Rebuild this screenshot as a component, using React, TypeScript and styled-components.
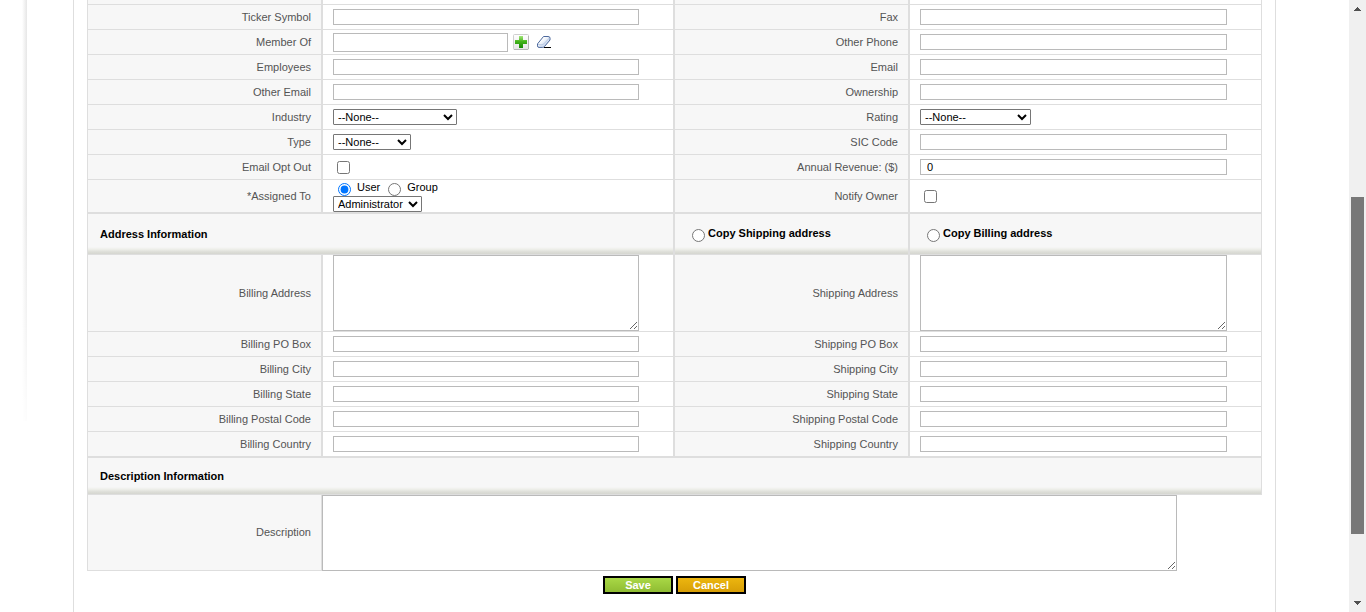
import React from 'react';
import styled, { createGlobalStyle } from 'styled-components';

const line = '#dedede';
const shade = '#f7f7f7';

const GlobalStyle = createGlobalStyle`
  * { box-sizing: border-box; }
  body {
    margin: 0;
    background: #fff;
    color: #000;
    font-family: "Liberation Sans", Arial, Helvetica, sans-serif;
    font-size: 11px;
    line-height: 13px;
  }
`;

const Viewport = styled.div`
  display: flex;
  height: 100vh;
  overflow: hidden;
`;

const EdgeShadow = styled.div`
  flex: none;
  width: 5px;
  height: 421px;
  margin-left: 22px;
  background: linear-gradient(to right, #fff, #e6e6e6);
  mask-image: linear-gradient(to bottom, #000 50%, rgba(0, 0, 0, 0.1));
`;

const Panel = styled.main`
  flex: 1;
  min-width: 0;
  min-height: 100%;
  margin: 0 73px 0 46px;
  padding: 0 13px;
  border: solid ${line};
  border-width: 0 1px;
`;

const Grid = styled.div`
  display: grid;
  grid-template-columns: 20% round(down, 30%, 1px) 20% 1fr;
`;

const Cell = styled.div`
  display: flex;
  align-items: center;
  min-width: 0;
  border: solid ${line};
  border-width: 0 1px 1px;
`;

const LabelCell = styled(Cell)`
  justify-content: flex-end;
  padding-right: 10px;
  background: ${shade};
  color: #545454;
`;

const ValueCell = styled(Cell)<{ $tall?: boolean }>`
  min-height: ${p => (p.$tall ? 33 : 25)}px;
  padding-left: 10px;
`;

const ClippedCell = styled(Cell)<{ $shaded?: boolean }>`
  height: 5px;
  background: ${p => (p.$shaded ? shade : '#fff')};
`;

const HeaderCell = styled.div<{ $span?: number; $short?: boolean }>`
  display: flex;
  align-items: center;
  grid-column: span ${p => p.$span ?? 1};
  height: ${p => (p.$short ? 38 : 42)}px;
  padding-left: 12px;
  border: 1px solid ${line};
  background: linear-gradient(to top, #d5d6d0, #dcddd7 2px, #eff0eb 5px, ${shade} 7px);
  font-weight: bold;

  label { padding-bottom: 2px; }
`;

const SectionTitle = styled.h2`
  margin: 0;
  font-size: 11px;
  line-height: 13px;
`;

const TextInput = styled.input`
  width: 90%;
  height: 16px;
  padding: 0 6px;
  border: 1px solid #bababa;
  background: #fff;
  font: inherit;
  outline: none;
`;

const LookupInput = styled(TextInput)`
  width: 175px;
  height: 19px;
`;

const IconButton = styled.button`
  display: flex;
  width: 16px;
  height: 16px;
  margin-left: 5px;
  padding: 0;
  border: 0;
  background: none;

  & + & { margin-left: 7px; }
`;

const TextArea = styled.textarea<{ $wide?: boolean }>`
  display: block;
  width: ${p => (p.$wide ? '91%' : '90%')};
  height: 76px;
  padding: 2px;
  border: 1px solid #bababa;
  background: #fff;
  font: inherit;
`;

const Select = styled.select<{ $width: number }>`
  width: ${p => p.$width}px;
  height: 16px;
  padding: 0;
  border: 1px solid #767676;
  border-radius: 1px;
  background: #fff;
  color: #000;
  font: inherit;
`;

const Check = styled.input`
  width: 13px;
  height: 13px;
  margin: 0 4px;
`;

const Radio = styled.input`
  width: 13px;
  height: 13px;
  margin: 3px 3px 0 5px;
`;

const OwnerStack = styled.div`
  display: flex;
  flex-direction: column;
`;

const OwnerTypes = styled.div`
  display: flex;
  height: 16px;
  label { padding: 1px 3px 0; }
`;

const DescriptionCell = styled.div`
  grid-column: span 3;
`;

const Actions = styled.div`
  display: flex;
  justify-content: center;
  gap: 3px;
  padding-top: 5px;
`;

const ActionButton = styled.button<{ $tone: 'save' | 'cancel' }>`
  width: 70px;
  height: 18px;
  padding: 0;
  border: 2px solid #000;
  background: ${p =>
    p.$tone === 'save'
      ? 'linear-gradient(#a9d846, #8fbc32)'
      : 'linear-gradient(#ecb60f, #d79e06)'};
  color: #fff;
  font: bold 11px/13px "Liberation Sans", Arial, sans-serif;
`;

const ScrollTrack = styled.div`
  display: flex;
  flex: none;
  flex-direction: column;
  align-items: center;
  width: 17px;
  padding: 7px 0;
  background: #f0f0f0;
`;

const ScrollThumb = styled.div`
  width: 13px;
  height: 337px;
  margin: 186px 0 auto;
  background: #787878;
`;

const PlusIcon = () => (
  <svg width="16" height="16" viewBox="0 0 16 16" aria-hidden="true">
    <defs>
      <linearGradient id="plusFill" x1="0" y1="0" x2="0" y2="1">
        <stop offset="0" stopColor="#a5e67c" />
        <stop offset="0.45" stopColor="#46b51c" />
        <stop offset="1" stopColor="#158a04" />
      </linearGradient>
      <linearGradient id="plusTile" x1="0" y1="0" x2="0" y2="1">
        <stop offset="0" stopColor="#ffffff" />
        <stop offset="1" stopColor="#e6e6e6" />
      </linearGradient>
    </defs>
    <rect x="0.5" y="0.5" width="15" height="15" rx="1" fill="url(#plusTile)" stroke="#cfcfcf" />
    <path d="M1 15.5h14M15.5 2v13" stroke="#b5b5b5" fill="none" />
    <path d="M6 2h4v4h4v4h-4v4H6v-4H2V6h4z" fill="url(#plusFill)" />
  </svg>
);

const EraserIcon = () => (
  <svg width="16" height="16" viewBox="0 0 16 16" aria-hidden="true">
    <defs>
      <linearGradient id="eraserFill" x1="0" y1="0" x2="1" y2="1">
        <stop offset="0.3" stopColor="#ffffff" />
        <stop offset="1" stopColor="#a9c0e4" />
      </linearGradient>
    </defs>
    <path d="M7.500 2.500h4.500q2 0 2 1.500v2l-5.500 6.500q-.6.900-1.800.900H3q-1.500 0-1.500-1.500v-2z" fill="url(#eraserFill)" stroke="#4c689c" />
    <path d="M2 10q.5.800 2 .8h2q1.200 0 1.800-.9l5.700-6" stroke="#b4c6e3" fill="none" />
    <path d="M8 13.500h7" stroke="#000" />
  </svg>
);

const ArrowUp = () => (
  <svg width="7" height="4" viewBox="0 0 7 4" shapeRendering="crispEdges" aria-hidden="true">
    <path d="M3 0h1v1h1v1h1v1h1v1H0V3h1V2h1V1h1z" fill="#505050" />
  </svg>
);

const ArrowDown = () => (
  <svg width="7" height="4" viewBox="0 0 7 4" shapeRendering="crispEdges" aria-hidden="true">
    <path d="M0 0h7v1H6v1H5v1H4v1H3V3H2V2H1V1H0z" fill="#505050" />
  </svg>
);

type Kind = 'text' | 'lookup' | 'select' | 'check' | 'owner' | 'area';

interface Field {
  label: string;
  kind?: Kind;
  width?: number;
  value?: string;
  tall?: boolean;
}

const detailFields: Field[] = [
  { label: 'Ticker Symbol' },
  { label: 'Fax' },
  { label: 'Member Of', kind: 'lookup' },
  { label: 'Other Phone' },
  { label: 'Employees' },
  { label: 'Email' },
  { label: 'Other Email' },
  { label: 'Ownership' },
  { label: 'Industry', kind: 'select', width: 124 },
  { label: 'Rating', kind: 'select', width: 111 },
  { label: 'Type', kind: 'select', width: 78 },
  { label: 'SIC Code' },
  { label: 'Email Opt Out', kind: 'check' },
  { label: 'Annual Revenue: ($)', value: '0' },
  { label: '*Assigned To', kind: 'owner', tall: true },
  { label: 'Notify Owner', kind: 'check', tall: true },
];

const addressFields: Field[] = [
  { label: 'Billing Address', kind: 'area' },
  { label: 'Shipping Address', kind: 'area' },
  { label: 'Billing PO Box' },
  { label: 'Shipping PO Box' },
  { label: 'Billing City' },
  { label: 'Shipping City' },
  { label: 'Billing State' },
  { label: 'Shipping State' },
  { label: 'Billing Postal Code' },
  { label: 'Shipping Postal Code' },
  { label: 'Billing Country' },
  { label: 'Shipping Country' },
];

const idOf = (label: string) => label.toLowerCase().replace(/[^a-z]+/g, '-');

const Control = ({ field }: { field: Field }) => {
  const id = idOf(field.label);
  switch (field.kind) {
    case 'lookup':
      return (
        <>
          <LookupInput id={id} type="text" readOnly />
          <IconButton type="button" aria-label="Select"><PlusIcon /></IconButton>
          <IconButton type="button" aria-label="Clear"><EraserIcon /></IconButton>
        </>
      );
    case 'select':
      return (
        <Select id={id} $width={field.width ?? 100}>
          <option>--None--</option>
        </Select>
      );
    case 'check':
      return <Check id={id} type="checkbox" />;
    case 'area':
      return <TextArea id={id} />;
    case 'owner':
      return (
        <OwnerStack>
          <OwnerTypes>
            <Radio id="owner-user" type="radio" name="ownerType" defaultChecked />
            <label htmlFor="owner-user">User</label>
            <Radio id="owner-group" type="radio" name="ownerType" />
            <label htmlFor="owner-group">Group</label>
          </OwnerTypes>
          <Select id={id} $width={89}>
            <option>Administrator</option>
          </Select>
        </OwnerStack>
      );
    default:
      return <TextInput id={id} type="text" defaultValue={field.value} />;
  }
};

const Fields = ({ items }: { items: Field[] }) => (
  <>
    {items.map(field => (
      <React.Fragment key={field.label}>
        <LabelCell>
          <label htmlFor={idOf(field.label)}>{field.label}</label>
        </LabelCell>
        <ValueCell $tall={field.tall}>
          <Control field={field} />
        </ValueCell>
      </React.Fragment>
    ))}
  </>
);

export default function App() {
  return (
    <>
      <GlobalStyle />
      <Viewport>
        <EdgeShadow />
        <Panel>
          <form onSubmit={e => e.preventDefault()}>
            <Grid>
              <ClippedCell $shaded />
              <ClippedCell />
              <ClippedCell $shaded />
              <ClippedCell />
              <Fields items={detailFields} />

              <HeaderCell $span={2}>
                <SectionTitle>Address Information</SectionTitle>
              </HeaderCell>
              <HeaderCell>
                <Radio id="copy-shipping" type="radio" name="copyAddress" />
                <label htmlFor="copy-shipping">Copy Shipping address</label>
              </HeaderCell>
              <HeaderCell>
                <Radio id="copy-billing" type="radio" name="copyAddress" />
                <label htmlFor="copy-billing">Copy Billing address</label>
              </HeaderCell>
              <Fields items={addressFields} />

              <HeaderCell $span={4} $short>
                <SectionTitle>Description Information</SectionTitle>
              </HeaderCell>
              <LabelCell>
                <label htmlFor="description">Description</label>
              </LabelCell>
              <DescriptionCell>
                <TextArea id="description" $wide />
              </DescriptionCell>
            </Grid>
            <Actions>
              <ActionButton type="submit" $tone="save">Save</ActionButton>
              <ActionButton type="button" $tone="cancel">Cancel</ActionButton>
            </Actions>
          </form>
        </Panel>
        <ScrollTrack>
          <ArrowUp />
          <ScrollThumb />
          <ArrowDown />
        </ScrollTrack>
      </Viewport>
    </>
  );
}
